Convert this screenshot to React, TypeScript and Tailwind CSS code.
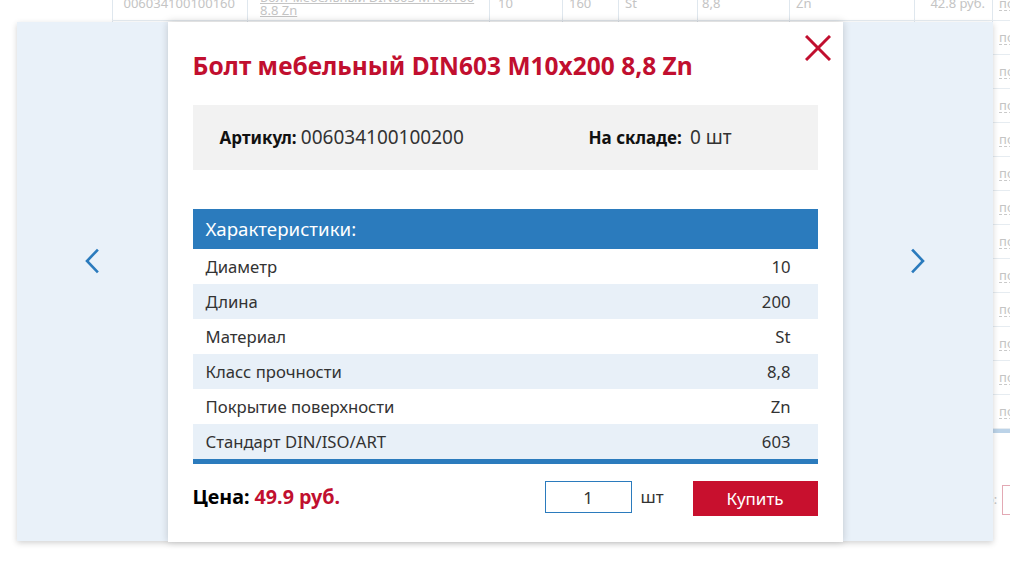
import React from 'react';

const specs = [
    ['Диаметр', '10'],
    ['Длина', '200'],
    ['Материал', 'St'],
    ['Класс прочности', '8,8'],
    ['Покрытие поверхности', 'Zn'],
    ['Стандарт DIN/ISO/ART', '603'],
];

const cols = 'grid grid-cols-[135px_242px_73px_56px_79px_92px_125px_78px_80px]';

function BackgroundTable() {
    const rows = Array.from({ length: 13 });
    return (
        <div className="w-[1100px] -mt-[13px] text-[13px] text-[#c4c4c4]">
            <div className="ml-[112px] border-b-4 border-[#bcd3e8]">
                {rows.map((_, i) => (
                    <div key={i} className={`${cols} h-[34px] border-b border-[#e6ecf1]`}>
                        <div className="border-l border-[#dfe7ee] pr-[12px] flex items-center justify-end">{i === 0 ? '006034100100160' : ''}</div>
                        <div className="border-l border-[#dfe7ee] px-[12px] flex flex-col justify-center leading-[13px] underline overflow-hidden">
                            {i === 0 && <><span className="whitespace-nowrap">Болт мебельный DIN603 M10x160</span><span>8.8 Zn</span></>}
                        </div>
                        <div className="border-l border-[#dfe7ee] px-[8px] flex items-center">{i === 0 ? '10' : ''}</div>
                        <div className="border-l border-[#dfe7ee] px-[6px] flex items-center">{i === 0 ? '160' : ''}</div>
                        <div className="border-l border-[#dfe7ee] px-[6px] flex items-center">{i === 0 ? 'St' : ''}</div>
                        <div className="border-l border-[#dfe7ee] px-[4px] flex items-center">{i === 0 ? '8,8' : ''}</div>
                        <div className="border-l border-[#dfe7ee] px-[6px] flex items-center">{i === 0 ? 'Zn' : ''}</div>
                        <div className="border-l border-[#dfe7ee] px-[7px] flex items-center justify-end">{i === 0 ? '42.8 руб.' : ''}</div>
                        <div className="border-l border-[#dfe7ee] px-[6px] flex items-center">
                            <span className="border-b border-dashed border-[#c9c9c9] leading-[13px]">подробнее</span>
                        </div>
                    </div>
                ))}
            </div>
            <div className="flex items-center h-[62px] mt-[36px] pl-[957px] gap-[5px]">
                <span>Итого:</span>
                <span className="w-[60px] h-[30px] border border-[#e3a9b4]" />
            </div>
        </div>
    );
}

function Chevron({ dir }: { dir: 'left' | 'right' }) {
    return (
        <svg width="16" height="26" viewBox="0 0 16 26" fill="none" stroke="#2b7bbd" strokeWidth="2.6" strokeLinecap="square">
            {dir === 'left' ? <polyline points="13,2.5 3,13 13,23.5" /> : <polyline points="3,2.5 13,13 3,23.5" />}
        </svg>
    );
}

export default function App() {
    return (
        <div className="relative w-[1010px] h-[566px] overflow-hidden bg-white font-['Noto_Sans',sans-serif]">
            <BackgroundTable />
            <div className="absolute inset-0 pt-[22px] pl-[17px]">
                <div className="flex w-[976px] h-[519px] bg-[#e9f1f9] shadow-[0_2px_6px_rgba(0,0,0,0.18)]">
                    <div className="flex-1 flex justify-center pt-[226px]"><Chevron dir="left" /></div>
                    <div className="relative w-[675px] h-[520px] bg-white shadow-[0_0_8px_rgba(0,0,0,0.18)] px-[25px] pt-[28px]">
                        <button className="absolute top-[13px] right-[12px] w-[26px] h-[26px]">
                            <svg width="26" height="26" viewBox="0 0 26 26" stroke="#c10f2f" strokeWidth="3">
                                <line x1="1" y1="1" x2="25" y2="25" />
                                <line x1="25" y1="1" x2="1" y2="25" />
                            </svg>
                        </button>
                        <h1 className="text-[24.5px] leading-[32px] font-bold text-[#c10f2f]">Болт мебельный DIN603 M10x200 8,8 Zn</h1>
                        <div className="mt-[23px] h-[65px] bg-[#f2f2f2] grid grid-cols-[369px_1fr] items-center pl-[27px] text-[#111]">
                            <div><span className="font-bold text-[17px]">Артикул:</span> <span className="text-[19px] text-[#333]">006034100100200</span></div>
                            <div><span className="font-bold text-[17px]">На складе:</span> <span className="ml-[4px] text-[19px] text-[#333]">0 шт</span></div>
                        </div>
                        <div className="mt-[39px] border-b-[5px] border-[#2b7bbd]">
                            <div className="h-[40px] bg-[#2b7bbd] text-white text-[18.7px] flex items-center pl-[13px]">Характеристики:</div>
                            {specs.map(([name, value], i) => (
                                <div key={name} className={`h-[35px] flex items-center justify-between pl-[13px] pr-[27px] text-[16.7px] text-[#333] ${i % 2 ? 'bg-[#e8f0f8]' : 'bg-white'}`}>
                                    <span>{name}</span>
                                    <span>{value}</span>
                                </div>
                            ))}
                        </div>
                        <div className="mt-[17px] flex items-start">
                            <div className="flex-1 h-[32px] flex items-center text-[19.7px] font-bold text-black">
                                Цена:&nbsp;<span className="text-[#c10f2f]">49.9 руб.</span>
                            </div>
                            <input defaultValue="1" className="w-[87px] h-[32px] border border-[#2b7bbd] text-center text-[17px] text-[#333] outline-none" />
                            <span className="w-[61px] h-[32px] flex items-center pl-[9px] text-[17px] text-[#333]">шт</span>
                            <button className="w-[125px] h-[35px] bg-[#c8102e] text-white text-[17px]">Купить</button>
                        </div>
                    </div>
                    <div className="flex-1 flex justify-center pt-[226px]"><Chevron dir="right" /></div>
                </div>
            </div>
        </div>
    );
}
